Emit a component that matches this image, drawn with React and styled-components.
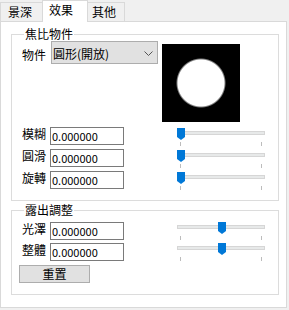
import React from "react";
import styled, { createGlobalStyle } from "styled-components";

const GlobalStyle = createGlobalStyle`
  html, body {
    margin: 0;
    padding: 0;
    background: #f0f0f0;
  }
  body {
    font-family: "Noto Sans CJK TC", "Noto Sans CJK SC", sans-serif;
    font-size: 12px;
    color: #000;
  }
`;

const Window = styled.div`
  width: 289px;
  height: 310px;
  background: #f0f0f0;
  overflow: hidden;
`;

const TabStrip = styled.div`
  display: flex;
  align-items: flex-end;
  height: 21px;
`;

const Tab = styled.div`
  box-sizing: border-box;
  position: relative;
  z-index: ${(p) => (p.$active ? 1 : 0)};
  width: ${(p) => p.$w}px;
  height: ${(p) => (p.$active ? 22 : 19)}px;
  margin-left: ${(p) => (p.$first ? 0 : -1)}px;
  margin-bottom: ${(p) => (p.$active ? -1 : 0)}px;
  padding-left: ${(p) => p.$pl}px;
  padding-bottom: ${(p) => (p.$active ? 3 : 0)}px;
  border: 1px solid #d9d9d9;
  border-bottom: none;
  background: ${(p) => (p.$active ? "#fff" : "#f0f0f0")};
  display: flex;
  align-items: center;
  line-height: 1;
`;

const Panel = styled.div`
  box-sizing: border-box;
  width: 287px;
  height: 287px;
  border: 1px solid #d9d9d9;
  background: #fff;
  padding: 5px 7px 0 10px;
  display: flex;
  flex-direction: column;
  gap: 2px;
`;

const Group = styled.fieldset`
  margin: 0;
  min-width: 0;
  padding: ${(p) => p.$pt}px 0 ${(p) => p.$pb}px 7px;
  border: 1px solid #dcdcdc;
`;

const Legend = styled.legend`
  margin-left: 5px;
  padding: 0 1px;
  font-size: 12px;
  line-height: 14px;
`;

const TopRow = styled.div`
  display: flex;
  align-items: flex-start;
`;

const Row = styled.div`
  display: flex;
  align-items: flex-start;
  height: ${(p) => p.$h}px;
`;

const Label = styled.span`
  box-sizing: border-box;
  width: 31px;
  padding-left: 3px;
  margin-top: ${(p) => p.$mt || 0}px;
  line-height: 14px;
  white-space: nowrap;
`;

const Combo = styled.div`
  box-sizing: border-box;
  width: 107px;
  height: 23px;
  margin-left: 1px;
  padding: 2px 4px 0 1px;
  border: 1px solid #adadad;
  background: #e1e1e1;
  display: flex;
  align-items: center;
  justify-content: space-between;
  line-height: 14px;
`;

const Preview = styled.div`
  width: 78px;
  height: 78px;
  margin: 3px 0 5px 4px;
  background: radial-gradient(circle at 50% 50%, #fff 0, #fff 23px, #000 25px);
`;

const TextBox = styled.input`
  box-sizing: border-box;
  width: 74px;
  height: 18px;
  margin: 0;
  padding: 0 0 0 1px;
  border: 1px solid #7a7a7a;
  background: #fff;
  font-family: "Noto Sans CJK TC", sans-serif;
  font-size: 11px;
  line-height: 16px;
  color: #000;
  outline: none;
`;

const SliderBox = styled.div`
  position: relative;
  width: 88px;
  height: 22px;
  margin-left: 53px;
  margin-top: ${(p) => p.$dy || 0}px;
`;

const Track = styled.div`
  position: absolute;
  left: 0;
  right: 0;
  top: 4px;
  height: 4px;
  box-sizing: border-box;
  background: #e7e9e9;
  border: 1px solid #d6d6d6;
`;

const Tick = styled.div`
  position: absolute;
  top: 15px;
  width: 1px;
  height: 4px;
  background: #bcbcbc;
`;

const Thumb = styled.svg`
  position: absolute;
  top: 1px;
`;

const Button = styled.div`
  box-sizing: border-box;
  width: 71px;
  height: 18px;
  margin: 1px 0 0 0;
  border: 1px solid #adadad;
  background: #e1e1e1;
  display: flex;
  align-items: center;
  justify-content: center;
  line-height: 14px;
`;

const Slider = ({ value, dy }) => (
  <SliderBox $dy={dy}>
    <Track />
    <Tick style={{ left: 3 }} />
    <Tick style={{ left: 84 }} />
    <Thumb
      width="8"
      height="12"
      viewBox="0 0 8 12"
      style={{ left: Math.round(value * 81) }}
    >
      <path d="M0 0H8V9L4 12L0 9Z" fill="#0078d7" />
    </Thumb>
  </SliderBox>
);

const ParamRow = ({ label, value, h, dy }) => (
  <Row $h={h}>
    <Label>{label}</Label>
    <TextBox readOnly value="0.000000" />
    <Slider value={value} dy={dy} />
  </Row>
);

export default function App() {
  return (
    <Window>
      <GlobalStyle />
      <TabStrip>
        <Tab $first $w={43} $pl={7}>
          景深
        </Tab>
        <Tab $active $w={46} $pl={6}>
          效果
        </Tab>
        <Tab $w={38} $pl={4}>
          其他
        </Tab>
      </TabStrip>
      <Panel>
        <Group $pt={0} $pb={7}>
          <Legend>焦比物件</Legend>
          <TopRow>
            <Label $mt={7}>物件</Label>
            <Combo>
              <span>圓形(開放)</span>
              <svg width="9" height="5" viewBox="0 0 9 5">
                <path d="M0.5 0.5L4.5 4.5L8.5 0.5" fill="none" stroke="#555" />
              </svg>
            </Combo>
            <Preview />
          </TopRow>
          <ParamRow label="模糊" value={0} h={22} />
          <ParamRow label="圓滑" value={0} h={22} />
          <ParamRow label="旋轉" value={0} h={22} />
        </Group>
        <Group $pt={5} $pb={11}>
          <Legend>露出調整</Legend>
          <ParamRow label="光澤" value={0.5} h={21} dy={-1} />
          <ParamRow label="整體" value={0.5} h={21} dy={-1} />
          <Button>重置</Button>
        </Group>
      </Panel>
    </Window>
  );
}
